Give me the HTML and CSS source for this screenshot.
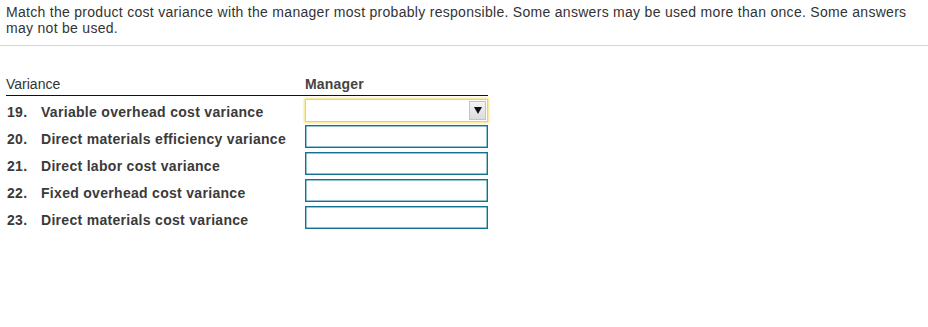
FILE: index.html
```html
<!DOCTYPE html>
<html>
<head>
<meta charset="utf-8">
<link rel="stylesheet" href="styles.css">
</head>
<body>
<div class="prompt">Match the product cost variance with the manager most probably responsible. Some answers may be used more than once. Some answers may not be used.</div>
<div class="matching">
  <div class="head">
    <div class="col-left head-variance">Variance</div>
    <div class="col-right head-manager">Manager</div>
  </div>
  <div class="row">
    <div class="col-left label"><span class="num">19.</span><span>Variable overhead cost variance</span></div>
    <div class="col-right"><div class="select"><span class="arrow"><span class="tri"></span></span></div></div>
  </div>
  <div class="row">
    <div class="col-left label"><span class="num">20.</span><span>Direct materials efficiency variance</span></div>
    <div class="col-right"><div class="box"></div></div>
  </div>
  <div class="row">
    <div class="col-left label"><span class="num">21.</span><span>Direct labor cost variance</span></div>
    <div class="col-right"><div class="box"></div></div>
  </div>
  <div class="row">
    <div class="col-left label"><span class="num">22.</span><span>Fixed overhead cost variance</span></div>
    <div class="col-right"><div class="box"></div></div>
  </div>
  <div class="row">
    <div class="col-left label"><span class="num">23.</span><span>Direct materials cost variance</span></div>
    <div class="col-right"><div class="box"></div></div>
  </div>
</div>
</body>
</html>
```
FILE: styles.css
```css
html, body {
  margin: 0;
  padding: 0;
  background: #fff;
}
body {
  font-family: "Liberation Sans", Arial, sans-serif;
  color: #333;
}
.prompt {
  font-size: 14px;
  line-height: 16px;
  letter-spacing: 0.29px;
  padding: 4px 0 9px 6px;
  border-bottom: 1px solid #cfd6e0;
}
.matching {
  margin: 30px 0 0 6px;
  width: 482px;
}
.head {
  display: flex;
  font-size: 14px;
  line-height: 16px;
  padding-bottom: 3px;
  border-bottom: 1px solid #111;
}
.col-left {
  width: 299px;
  flex: none;
}
.col-right {
  flex: 1;
}
.head-manager {
  font-weight: bold;
  color: #444;
  letter-spacing: 0.2px;
}
.row {
  display: flex;
  align-items: center;
  height: 27px;
}
.label {
  font-size: 14px;
  font-weight: bold;
  line-height: 16px;
  letter-spacing: 0.3px;
  color: #3a3a3a;
  display: flex;
  padding-left: 1px;
  padding-top: 4px;
  box-sizing: border-box;
}
.num {
  width: 34px;
  flex: none;
}
.box {
  width: 183px;
  height: 23px;
  box-sizing: border-box;
  border: 1px solid #13728d;
  box-shadow: inset 0 0 0 0.5px #2a88a2;
}
.select {
  width: 183px;
  height: 23px;
  margin-top: 1px;
  box-sizing: border-box;
  border: 1px solid #f1d451;
  box-shadow: 0 0 2px 1px #f8e27a;
  background: #fff;
  display: flex;
  justify-content: flex-end;
  align-items: center;
  padding-right: 1px;
}
.arrow {
  width: 17px;
  height: 19px;
  box-sizing: border-box;
  border: 1px solid #c4c4c4;
  background: linear-gradient(#f4f4f4, #dcdcdc);
  display: flex;
  align-items: center;
  justify-content: center;
}
.tri {
  width: 0;
  height: 0;
  border-left: 4px solid transparent;
  border-right: 4px solid transparent;
  border-top: 7px solid #111;
  margin-top: 1px;
}
```
